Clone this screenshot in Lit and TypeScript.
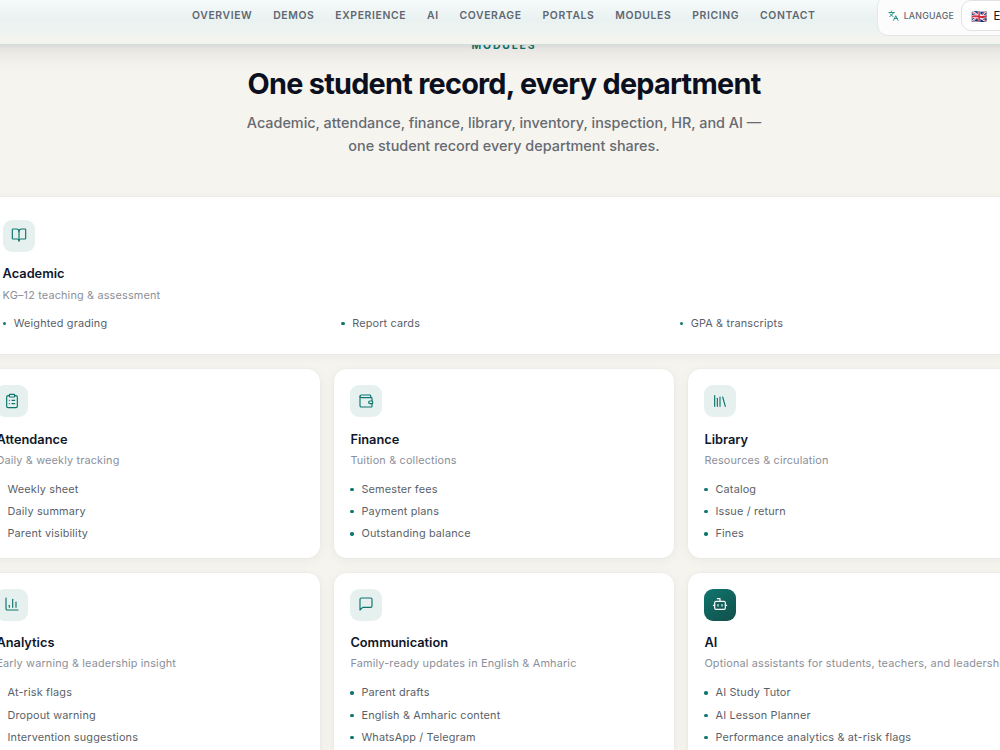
import { LitElement, html, css, svg, TemplateResult } from "lit";
import { customElement, property } from "lit/decorators.js";

const icons: Record<string, TemplateResult> = {
  book: svg`<path d="M12 7v14"/><path d="M3 18a1 1 0 0 1-1-1V4a1 1 0 0 1 1-1h5a4 4 0 0 1 4 4 4 4 0 0 1 4-4h5a1 1 0 0 1 1 1v13a1 1 0 0 1-1 1h-6a3 3 0 0 0-3 3 3 3 0 0 0-3-3z"/>`,
  clipboard: svg`<rect width="8" height="4" x="8" y="2" rx="1" ry="1"/><path d="M16 4h2a2 2 0 0 1 2 2v14a2 2 0 0 1-2 2H6a2 2 0 0 1-2-2V6a2 2 0 0 1 2-2h2"/><path d="M12 11h4"/><path d="M12 16h4"/><path d="M8 11h.01"/><path d="M8 16h.01"/>`,
  wallet: svg`<path d="M19 7V4a1 1 0 0 0-1-1H5a2 2 0 0 0 0 4h15a1 1 0 0 1 1 1v4h-3a2 2 0 0 0 0 4h3a1 1 0 0 0 1-1v-2a1 1 0 0 0-1-1"/><path d="M3 5v14a2 2 0 0 0 2 2h15a1 1 0 0 0 1-1v-4"/>`,
  library: svg`<path d="m16 6 4 14"/><path d="M12 6v14"/><path d="M8 8v12"/><path d="M4 4v16"/>`,
  chart: svg`<path d="M3 3v16a2 2 0 0 0 2 2h16"/><path d="M18 17V9"/><path d="M13 17V5"/><path d="M8 17v-3"/>`,
  message: svg`<path d="M21 15a2 2 0 0 1-2 2H7l-4 4V5a2 2 0 0 1 2-2h14a2 2 0 0 1 2 2z"/>`,
  bot: svg`<path d="M12 8V4H8"/><rect width="16" height="12" x="4" y="8" rx="2"/><path d="M2 14h2"/><path d="M20 14h2"/><path d="M15 13v2"/><path d="M9 13v2"/>`,
  languages: svg`<path d="m5 8 6 6"/><path d="m4 14 6-6 2-3"/><path d="M2 5h12"/><path d="M7 2h1"/><path d="m22 22-5-10-5 10"/><path d="M14 18h6"/>`,
};

@customElement("ui-icon")
export class UiIcon extends LitElement {
  static styles = css`
    :host { display: inline-flex; width: 16px; height: 16px; }
    svg {
      width: 100%; height: 100%; fill: none; stroke: currentColor;
      stroke-width: var(--stroke, 1.75); stroke-linecap: round; stroke-linejoin: round;
    }
  `;
  @property() name = "";
  render() {
    return html`<svg viewBox="0 0 24 24" aria-hidden="true">${icons[this.name]}</svg>`;
  }
}

interface Module {
  icon: string;
  title: string;
  sub: string;
  items: string[];
  wide?: boolean;
  dark?: boolean;
}

const modules: Module[] = [
  { icon: "book", title: "Academic", sub: "KG–12 teaching & assessment", items: ["Weighted grading", "Report cards", "GPA & transcripts"], wide: true },
  { icon: "clipboard", title: "Attendance", sub: "Daily & weekly tracking", items: ["Weekly sheet", "Daily summary", "Parent visibility"] },
  { icon: "wallet", title: "Finance", sub: "Tuition & collections", items: ["Semester fees", "Payment plans", "Outstanding balance"] },
  { icon: "library", title: "Library", sub: "Resources & circulation", items: ["Catalog", "Issue / return", "Fines"] },
  { icon: "chart", title: "Analytics", sub: "Early warning & leadership insight", items: ["At-risk flags", "Dropout warning", "Intervention suggestions"] },
  { icon: "message", title: "Communication", sub: "Family-ready updates in English & Amharic", items: ["Parent drafts", "English & Amharic content", "WhatsApp / Telegram"] },
  { icon: "bot", title: "AI", sub: "Optional assistants for students, teachers, and leadership", items: ["AI Study Tutor", "AI Lesson Planner", "Performance analytics & at-risk flags"], dark: true },
];

@customElement("module-card")
export class ModuleCard extends LitElement {
  static styles = css`
    :host {
      display: block; box-sizing: border-box; height: 189.2px; padding: 16.1px 16.4px 0;
      border-radius: 12.8px; background: #fff; min-width: 0;
      box-shadow: 0 0 0 1px rgba(15, 23, 42, 0.015), 0 2px 12px rgba(15, 23, 42, 0.05);
    }
    :host([wide]) { grid-column: 1 / -1; height: 156.9px; margin-bottom: 0.5px; padding: 22.6px 24px 0 22.6px; }
    .tile {
      display: flex; align-items: center; justify-content: center; box-sizing: border-box;
      width: 32px; height: 32px; padding-bottom: 1px; border-radius: 9px;
      background: #e6f1ef; color: #0f766e;
    }
    .tile.dark { background: linear-gradient(145deg, #0f766e, #134e4a); color: #fff; }
    .title { margin: 13.6px 0 0; font-size: 12.8px; line-height: 17px; font-weight: 600; color: #0f172a; }
    .sub { margin: 4.1px 0 0; font-size: 10.88px; letter-spacing: 0.16px; line-height: 17px; color: #8b8f99; white-space: nowrap; }
    .list { list-style: none; margin: 11.85px 0 0; padding: 0; display: grid; gap: 4.95px; }
    :host([wide]) .sub { margin-top: 4.6px; }
    :host([wide]) .list { grid-template-columns: repeat(3, 1fr); gap: 14px; margin-top: 10.8px; }
    .item {
      display: flex; align-items: center; gap: 7.6px; font-size: 10.88px; letter-spacing: 0.16px; line-height: 17.4px;
      color: #5a5f6a; white-space: nowrap;
    }
    .item::before { content: ""; width: 3.5px; height: 3.5px; flex: none; border-radius: 50%; background: #0f766e; }
  `;
  @property({ attribute: false }) module!: Module;
  render() {
    const m = this.module;
    return html`
      <div class="tile ${m.dark ? "dark" : ""}"><ui-icon name=${m.icon}></ui-icon></div>
      <h3 class="title">${m.title}</h3>
      <p class="sub">${m.sub}</p>
      <ul class="list">${m.items.map((i) => html`<li class="item">${i}</li>`)}</ul>
    `;
  }
}

const links = ["Overview", "Demos", "Experience", "AI", "Coverage", "Portals", "Modules", "Pricing", "Contact"];

@customElement("app-root")
export class AppRoot extends LitElement {
  static styles = css`
    :host {
      display: block; position: relative; width: 100%; height: 750px; overflow: hidden;
      background: #f6f4ef; font-family: Inter, "Liberation Sans", sans-serif;
    }
    .header {
      position: absolute; z-index: 2; top: 0; left: -40px; right: -40px; box-sizing: border-box;
      height: 45px; padding-left: 232px; display: flex; align-items: flex-start; overflow: visible;
      background: linear-gradient(180deg, #f6fafb 0, #e9f2f1 20px, #f5f4ef 42px);
      border-bottom: 1px solid #cbdfdc;
      box-shadow: 0 6px 24px rgba(15, 23, 42, 0.11), 0 1px 4px rgba(15, 23, 42, 0.06);
    }
    .nav { display: flex; gap: 20.9px; padding-top: 8px; }
    .link {
      font-size: 10.4px; line-height: 16px; font-weight: 600; letter-spacing: 0.62px;
      text-transform: uppercase; color: #5f6772; text-decoration: none;
    }
    .lang {
      flex: none; box-sizing: border-box; display: flex; align-items: center; width: 190px; height: 41px;
      margin: -5px 0 0 61.8px; padding: 0 0 0 10px; border: 1px solid #e3e8e8; border-radius: 11px;
      background: #fbfcfb;
    }
    .lang ui-icon { --stroke: 2; width: 11.5px; height: 11.5px; color: #0f8574; }
    .caption { margin-left: 4.4px; font-size: 8.8px; font-weight: 500; letter-spacing: 0.22px; color: #5f6772; }
    .select {
      display: flex; align-items: center; gap: 6.6px; box-sizing: border-box; height: 31px; width: 110px;
      margin-left: 7px; padding-left: 9px; border: 1px solid #dfe3e7; border-radius: 10px;
      background: #fff; font-size: 11.5px; color: #0f172a;
    }
    .flag { font-size: 13px; opacity: 0.9; }
    .intro { padding-top: 38.6px; text-align: center; width: 1008px; }
    .eyebrow {
      margin: 0; font-size: 10.4px; line-height: 14px; font-weight: 700; letter-spacing: 1.9px;
      text-transform: uppercase; color: #0f766e;
    }
    .heading { margin: 13.4px 0 0; font-size: 28.8px; line-height: 36px; font-weight: 700; letter-spacing: -0.72px; color: #0b1020; }
    .lede { margin: 9px auto 0; width: 540px; font-size: 14.4px; line-height: 23px; font-weight: 500; color: #666a72; }
    .grid {
      display: grid; grid-template-columns: repeat(3, 340px); gap: 14.4px 14px;
      width: 1048px; margin: 40.3px 0 0 -20px;
    }
  `;
  render() {
    return html`
      <header class="header">
        <nav class="nav">${links.map((l) => html`<a class="link">${l}</a>`)}</nav>
        <div class="lang">
          <ui-icon name="languages"></ui-icon><span class="caption">LANGUAGE</span>
          <div class="select"><span class="flag">🇬🇧</span><span>English</span></div>
        </div>
      </header>
      <section>
        <div class="intro">
          <p class="eyebrow">Modules</p>
          <h2 class="heading">One student record, every department</h2>
          <p class="lede">Academic, attendance, finance, library, inventory, inspection, HR, and AI —<br />one student record every department shares.</p>
        </div>
        <div class="grid">${modules.map((m) => html`<module-card ?wide=${m.wide} .module=${m}></module-card>`)}</div>
      </section>
    `;
  }
}
